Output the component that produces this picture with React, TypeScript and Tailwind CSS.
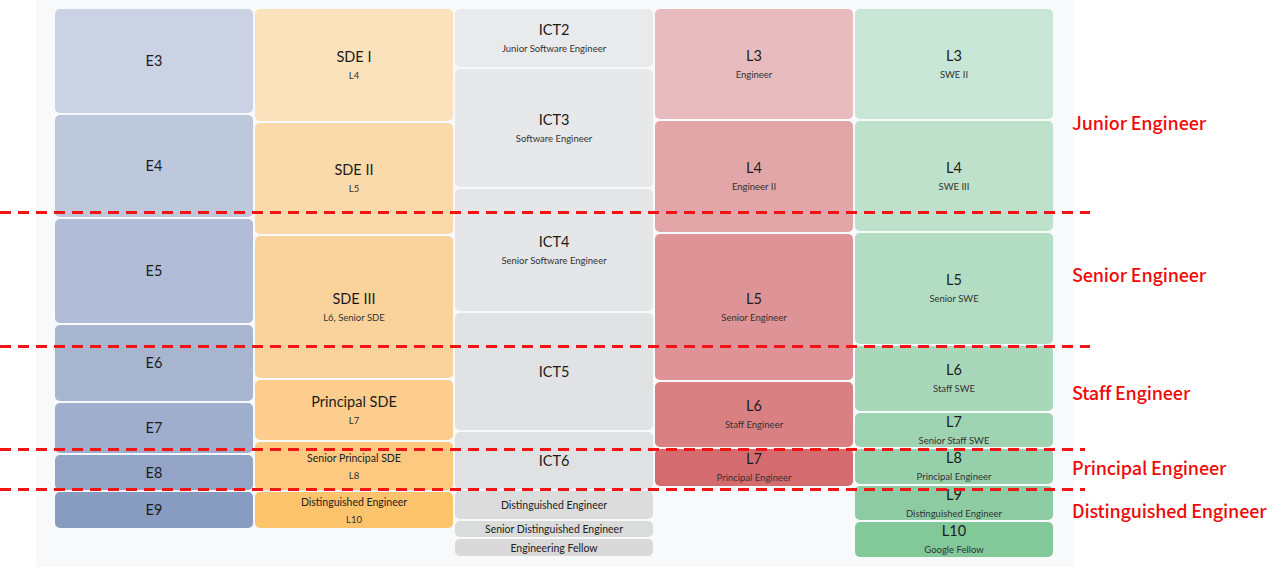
import React from "react";

type CellData = {
  t: string;
  s?: string;
  cls: string;
  small?: boolean;
};

const colE: CellData[] = [
  { t: "E3", cls: "h-[104px] bg-[#cbd2e4]" },
  { t: "E4", cls: "h-[102px] bg-[#bec8dc]" },
  { t: "E5", cls: "h-[104px] bg-[#b1bdd6]" },
  { t: "E6", cls: "h-[76px] bg-[#a8b5d1]" },
  { t: "E7", cls: "h-[50px] bg-[#9eaecc]" },
  { t: "E8", cls: "h-[35px] bg-[#93a4c6]" },
  { t: "E9", cls: "h-[36px] bg-[#889bc0]" },
];

const colSDE: CellData[] = [
  { t: "SDE I", s: "L4", cls: "h-[112px] bg-[#fae2bd]" },
  { t: "SDE II", s: "L5", cls: "h-[111px] bg-[#fad9aa]" },
  { t: "SDE III", s: "L6, Senior SDE", cls: "h-[142px] bg-[#fad29b]" },
  { t: "Principal SDE", s: "L7", cls: "h-[60px] bg-[#fccd8c]" },
  { t: "Senior Principal SDE", s: "L8", small: true, cls: "h-[48px] bg-[#fdc980]" },
  { t: "Distinguished Engineer", s: "L10", small: true, cls: "h-[36px] bg-[#fdc46d]" },
];

const colICT: CellData[] = [
  { t: "ICT2", s: "Junior Software Engineer", cls: "h-[58px] bg-[#e9eaec]" },
  { t: "ICT3", s: "Software Engineer", cls: "h-[118px] bg-[#e7e8ea]" },
  { t: "ICT4", s: "Senior Software Engineer", cls: "h-[122px] bg-[#e5e6e8]" },
  { t: "ICT5", cls: "h-[117px] bg-[#e1e2e4]" },
  { t: "ICT6", cls: "h-[57px] bg-[#e0e1e3]" },
  { t: "Distinguished Engineer", small: true, cls: "h-[28px] bg-[#dcdcdc]" },
  { t: "Senior Distinguished Engineer", small: true, cls: "h-[16px] bg-[#dadbdb]" },
  { t: "Engineering Fellow", small: true, cls: "h-[17px] bg-[#d8d9d8]" },
];

const colL: CellData[] = [
  { t: "L3", s: "Engineer", cls: "h-[110px] bg-[#e8bcbe]" },
  { t: "L4", s: "Engineer II", cls: "h-[111px] bg-[#e2a6a8]" },
  { t: "L5", s: "Senior Engineer", cls: "h-[146px] bg-[#de9497]" },
  { t: "L6", s: "Staff Engineer", cls: "h-[65px] bg-[#d98083]" },
  { t: "L7", s: "Principal Engineer", cls: "h-[37px] bg-[#d46c6f]" },
];

const colG: CellData[] = [
  { t: "L3", s: "SWE II", cls: "h-[110px] bg-[#c8e6d5]" },
  { t: "L4", s: "SWE III", cls: "h-[110px] bg-[#bde1cb]" },
  { t: "L5", s: "Senior SWE", cls: "h-[111px] bg-[#b3ddc3]" },
  { t: "L6", s: "Staff SWE", cls: "h-[65px] bg-[#a8d8b9]" },
  { t: "L7", s: "Senior Staff SWE", cls: "h-[34px] bg-[#9fd4b2]" },
  { t: "L8", s: "Principal Engineer", cls: "h-[35px] bg-[#96d0aa]" },
  { t: "L9", s: "Distinguished Engineer", cls: "h-[34px] bg-[#8dcca2]" },
  { t: "L10", s: "Google Fellow", cls: "h-[35px] bg-[#82c898]" },
];

function Cell({ d }: { d: CellData }) {
  return (
    <div
      className={`${d.cls} shrink-0 rounded-[5px] flex flex-col items-center justify-center text-center`}
    >
      <div
        className={
          d.small
            ? "text-[10.5px] leading-[16px] text-[#222] whitespace-nowrap"
            : "text-[14.5px] leading-[18px] text-[#1c1c1c] whitespace-nowrap"
        }
      >
        {d.t}
      </div>
      {d.s && (
        <div className="mt-[3px] text-[9.5px] leading-[14px] text-[#333] whitespace-nowrap">
          {d.s}
        </div>
      )}
    </div>
  );
}

function Column({ cells }: { cells: CellData[] }) {
  return (
    <div className="w-[198px] shrink-0 flex flex-col gap-[2px]">
      {cells.map((c, i) => (
        <Cell key={i} d={c} />
      ))}
    </div>
  );
}

const dash =
  "absolute left-0 h-[3px] bg-[repeating-linear-gradient(90deg,#f01414_0px,#f01414_11px,transparent_11px,transparent_18px)]";

export default function App() {
  return (
    <div
      className="relative w-[1280px] h-[567px] bg-white flex overflow-hidden"
      style={{ fontFamily: "Lato, 'Noto Sans', sans-serif" }}
    >
      <div className="w-[36px] shrink-0" />
      <div className="w-[1038px] shrink-0 h-full bg-[#f8f9fb] pl-[19px] pt-[9px] flex gap-[2px]">
        <Column cells={colE} />
        <Column cells={colSDE} />
        <Column cells={colICT} />
        <Column cells={colL} />
        <Column cells={colG} />
      </div>
      <div
        className="-ml-[2px] flex flex-col text-[18px] leading-[24px] font-medium text-[#f00a0a] whitespace-nowrap tracking-[-0.01em]"
        style={{ fontFamily: "'Noto Sans CJK KR', 'Noto Sans', sans-serif" }}
      >
        <div className="mt-[110px]">Junior Engineer</div>
        <div className="mt-[128px]">Senior Engineer</div>
        <div className="mt-[94px]">Staff Engineer</div>
        <div className="mt-[51px]">Principal Engineer</div>
        <div className="mt-[19px]">Distinguished Engineer</div>
      </div>
      <div className={`${dash} top-[210.5px] w-[1090px]`} />
      <div className={`${dash} top-[344.5px] w-[1090px]`} />
      <div className={`${dash} top-[447.5px] w-[1085px]`} />
      <div className={`${dash} top-[487.5px] w-[1085px]`} />
    </div>
  );
}
